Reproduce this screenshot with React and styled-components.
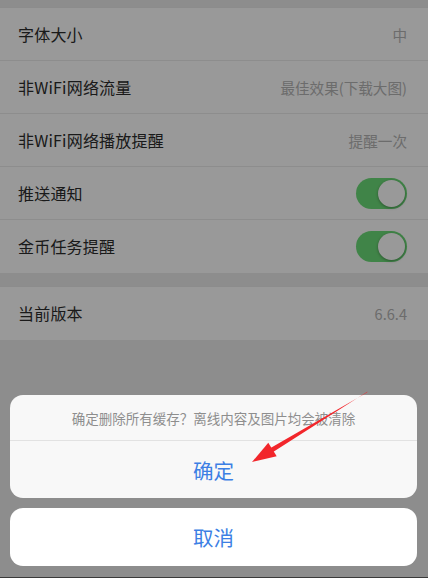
import React from "react";
import styled, { createGlobalStyle } from "styled-components";

const GlobalStyle = createGlobalStyle`
  html, body {
    margin: 0;
    padding: 0;
    background: #ffffff;
  }
  body {
    font-family: "Noto Sans CJK SC", "Noto Sans", "Liberation Sans", sans-serif;
  }
  * {
    box-sizing: border-box;
  }
`;

const Screen = styled.div`
  position: relative;
  height: 578px;
  background: #ececec;
  border-bottom: 1px solid #3a3a3a;
  overflow: hidden;
`;

const TopGap = styled.div`
  height: 7px;
`;

const Group = styled.div`
  background: #ffffff;
  border-top: 1px solid #eaeaea;
  margin-bottom: ${(props) => props.gap || 0}px;
`;

const Row = styled.div`
  height: 53px;
  display: flex;
  align-items: center;
  justify-content: space-between;
  padding: 0 21px 0 18px;
  border-bottom: 1px solid ${(props) => (props.last ? "transparent" : "#ececec")};
`;

const Label = styled.span`
  font-size: 16px;
  color: #2c2c2c;
  letter-spacing: 0.2px;
`;

const Value = styled.span`
  font-size: 14.6px;
  color: #b4b4b4;
`;

const Switch = styled.div`
  position: relative;
  width: 51px;
  height: 31px;
  border-radius: 16px;
  background: ${(props) => (props.on ? "#6cdc78" : "#e5e5e5")};
`;

const Knob = styled.div`
  position: absolute;
  top: 2px;
  right: ${(props) => (props.on ? "2px" : "auto")};
  left: ${(props) => (props.on ? "auto" : "2px")};
  width: 27px;
  height: 27px;
  border-radius: 50%;
  background: #ffffff;
  box-shadow: 0 1px 3px rgba(0, 0, 0, 0.35);
`;

const Overlay = styled.div`
  position: absolute;
  inset: 0;
  background: rgba(0, 0, 0, 0.4);
  display: flex;
  flex-direction: column;
  justify-content: flex-end;
  padding: 0 11px 11px 10px;
`;

const Sheet = styled.div`
  background: ${(props) => (props.solid ? "#ffffff" : "#f8f8f8")};
  border-radius: 13px;
  overflow: hidden;
  margin-top: ${(props) => (props.solid ? "10px" : "0")};
`;

const Message = styled.div`
  height: 46px;
  display: flex;
  align-items: center;
  justify-content: center;
  font-size: 13.5px;
  color: #8e8e8e;
  border-bottom: 1px solid #e2e2e2;
`;

const Action = styled.div`
  height: ${(props) => props.h}px;
  display: flex;
  align-items: center;
  justify-content: center;
  font-size: 20.5px;
  color: #3c7fe4;
`;

const Arrow = styled.svg`
  position: absolute;
  left: 0;
  top: 0;
  width: 428px;
  height: 581px;
  pointer-events: none;
`;

const Toggle = ({ on }) => (
  <Switch on={on}>
    <Knob on={on} />
  </Switch>
);

const settings = [
  { label: "字体大小", value: "中" },
  { label: "非WiFi网络流量", value: "最佳效果(下载大图)" },
  { label: "非WiFi网络播放提醒", value: "提醒一次" },
  { label: "推送通知", toggle: true },
  { label: "金币任务提醒", toggle: true },
];

export default function App() {
  return (
    <>
      <GlobalStyle />
      <Screen>
        <TopGap />
        <Group gap={13}>
          {settings.map((item, i) => (
            <Row key={item.label} last={i === settings.length - 1}>
              <Label>{item.label}</Label>
              {item.toggle ? <Toggle on /> : <Value>{item.value}</Value>}
            </Row>
          ))}
        </Group>
        <Group>
          <Row last>
            <Label>当前版本</Label>
            <Value>6.6.4</Value>
          </Row>
        </Group>

        <Overlay>
          <Sheet>
            <Message>确定删除所有缓存？离线内容及图片均会被清除</Message>
            <Action h={57}>确定</Action>
          </Sheet>
          <Sheet solid>
            <Action h={58}>取消</Action>
          </Sheet>
        </Overlay>

        {/* red annotation arrow pointing at 确定 */}
        <Arrow viewBox="0 0 428 581">
          <polygon
            points="367.6,391.5 367.0,392.5 266.2,450.6 268.8,454.8"
            fill="#f2262b"
          />
          <polygon
            points="252,462 268.3,442.7 276.7,456.3"
            fill="#f2262b"
          />
        </Arrow>
      </Screen>
    </>
  );
}
